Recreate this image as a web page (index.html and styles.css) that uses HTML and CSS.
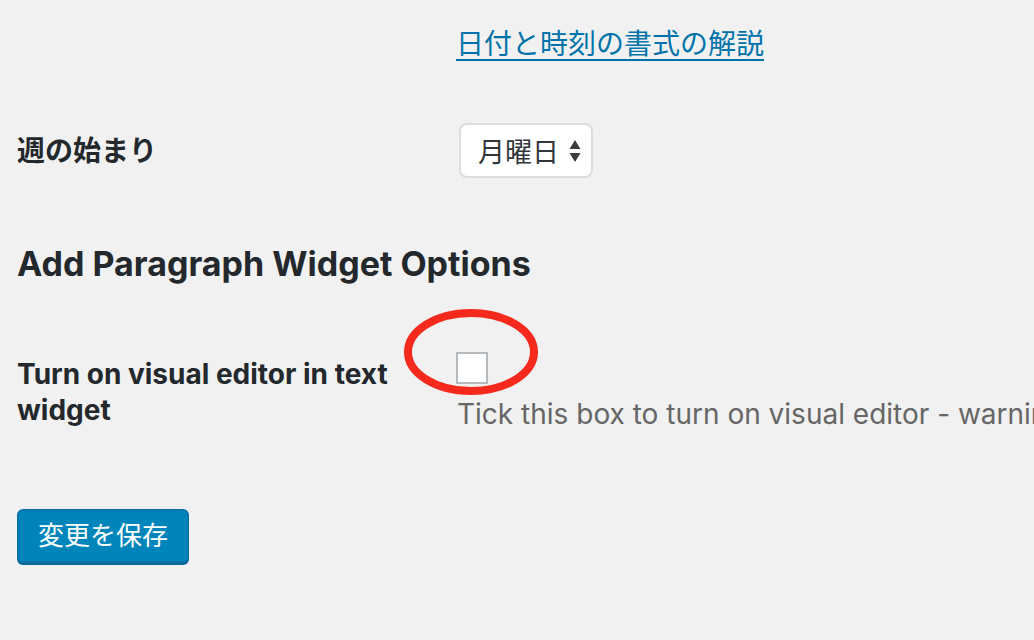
FILE: index.html
```html
<!DOCTYPE html>
<html lang="ja">
<head>
<meta charset="utf-8">
<link rel="stylesheet" href="styles.css">
</head>
<body>
<div class="page">
  <div class="row row-link">
    <div class="th"></div>
    <div class="td"><a class="doc-link" href="#">日付と時刻の書式の解説</a></div>
  </div>
  <div class="row row-week">
    <div class="th">週の始まり</div>
    <div class="td">
      <div class="select">
        <span>月曜日</span>
        <svg class="arrows" width="12" height="24" viewBox="0 0 12 24"><path d="M6 1 L11.5 10 L0.5 10 Z M0.5 14 L11.5 14 L6 23 Z" fill="#3c3c3c"/></svg>
      </div>
    </div>
  </div>
  <h2 class="section-title">Add Paragraph Widget Options</h2>
  <div class="row row-visual">
    <div class="th">Turn on visual editor in text widget</div>
    <div class="td">
      <div class="checkbox"></div>
      <p class="description">Tick this box to turn on visual editor - warning</p>
    </div>
  </div>
  <div class="submit"><button class="button-primary">変更を保存</button></div>
  <svg class="annotation" width="140" height="92" viewBox="0 0 140 92"><ellipse cx="69" cy="45" rx="63" ry="39" fill="none" stroke="#f5291c" stroke-width="8"/></svg>
</div>
</body>
</html>
```
FILE: styles.css
```css
html, body {
  margin: 0;
  padding: 0;
  background: #f1f1f1;
}
body {
  font-family: Inter, "Noto Sans CJK JP", sans-serif;
  color: #23282d;
  overflow: hidden;
  width: 1034px;
  height: 640px;
}
.page {
  position: relative;
  padding-left: 17px;
  width: 1017px;
  height: 640px;
  overflow: hidden;
}
.row {
  display: grid;
  grid-template-columns: 439px 1fr;
  align-items: start;
}
.th {
  font-weight: 700;
  font-size: 28px;
  line-height: 36px;
  width: 400px;
}
.row-link {
  padding-top: 25px;
}
.doc-link {
  font-size: 28px;
  line-height: 38px;
  color: #0073aa;
  text-decoration: underline;
  text-decoration-thickness: 2px;
  text-underline-offset: 5px;
}
.row-week {
  margin-top: 60px;
  align-items: center;
}
.select {
  display: inline-flex;
  align-items: center;
  gap: 10px;
  box-sizing: border-box;
  height: 55px;
  padding: 0 10px 0 17px;
  background: #fff;
  border: 2px solid #dcdcdc;
  border-radius: 8px;
  font-size: 27px;
  color: #32373c;
  margin-left: 3px;
}
.section-title {
  margin: 62px 0 0;
  font-size: 34px;
  line-height: 48px;
  font-weight: 700;
  color: #23282d;
}
.row-visual {
  margin-top: 60px;
}
.row-visual .th {
  margin-top: 8px;
}
.checkbox {
  box-sizing: border-box;
  width: 32px;
  height: 32px;
  background: #fff;
  border: 2px solid #b4b9be;
  margin-top: 4px;
}
.description {
  margin: 13px 0 0 1px;
  font-size: 28px;
  line-height: 34px;
  color: #666;
  white-space: nowrap;
}
.submit {
  margin-top: 78px;
}
.button-primary {
  font-family: Inter, "Noto Sans CJK JP", sans-serif;
  font-size: 26px;
  color: #fff;
  background: #0085ba;
  border: 2px solid #0073aa;
  border-radius: 6px;
  box-shadow: 0 2px 0 #006799;
  height: 54px;
  padding: 0 19px;
  line-height: 50px;
}
.annotation {
  position: absolute;
  left: 402px;
  top: 307px;
}
```
